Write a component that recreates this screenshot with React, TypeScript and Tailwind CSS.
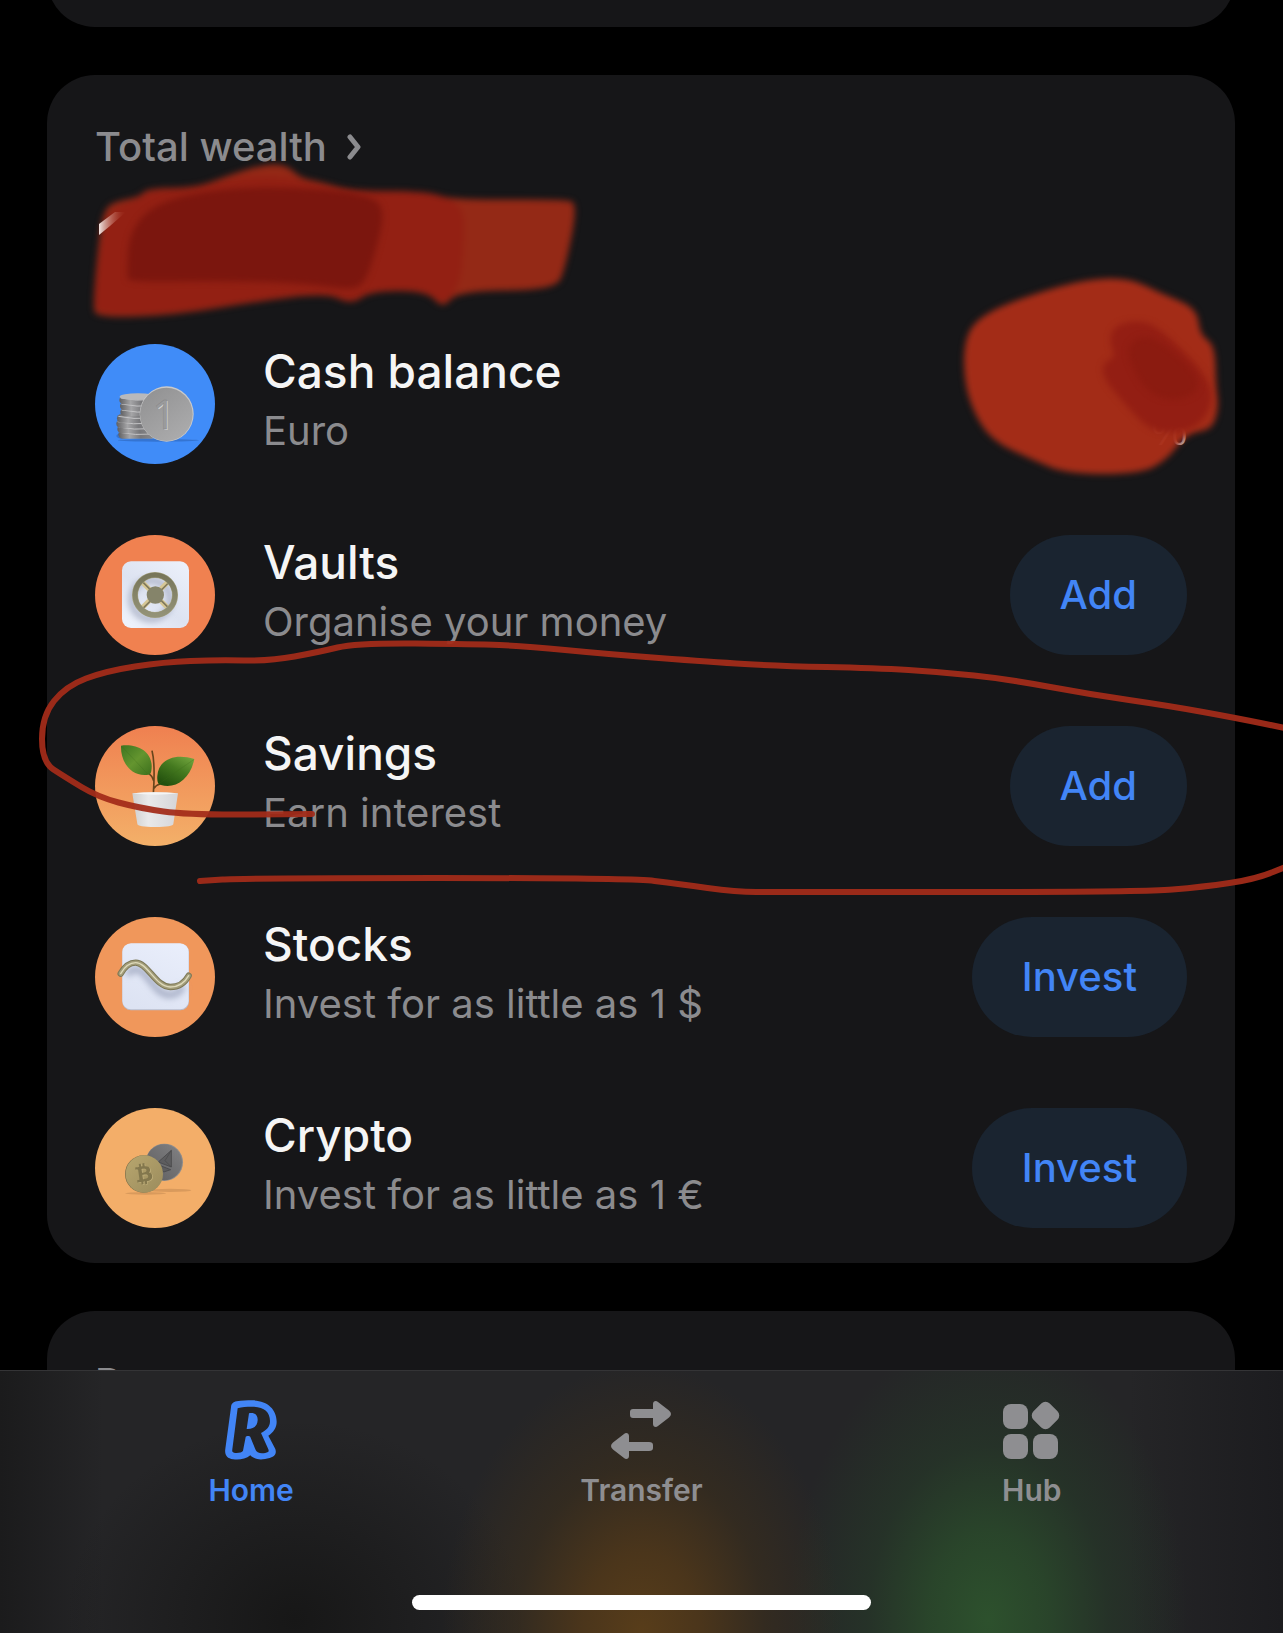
import React from "react";
import { FaBtc } from "react-icons/fa";

type Point = [number, number];

type Asset = {
	name: string;
	hint: string;
	action?: string;
	value?: string;
	icon: React.ReactNode;
};

// Curves between the midpoints, so hand drawn strokes stay smooth
function smooth(points: Point[], closed = false) {
	const mid = (a: Point, b: Point) => `${(a[0] + b[0]) / 2} ${(a[1] + b[1]) / 2}`;
	const n = points.length;
	if (closed) {
		const parts = points.map((p, i) => `Q${p[0]} ${p[1]} ${mid(p, points[(i + 1) % n])}`);
		return `M${mid(points[n - 1], points[0])}${parts.join("")}Z`;
	}
	const inner = points.slice(1, -1).map((p, i) => `Q${p[0]} ${p[1]} ${mid(p, points[i + 2])}`);
	return `M${points[0].join(" ")}L${mid(points[0], points[1])}${inner.join("")}L${points[n - 1].join(" ")}`;
}

const amountOuter: Point[] = [
	[93, 305], [98, 247], [104, 207], [122, 200], [139, 197], [148, 188], [196, 188], [229, 175],
	[261, 165], [286, 164], [300, 178], [322, 182], [351, 191], [424, 191], [453, 200], [565, 199],
	[578, 204], [565, 270], [555, 290], [457, 291], [443, 309], [427, 291], [371, 291], [351, 305],
	[327, 293], [253, 302], [176, 315], [96, 318],
];
const amountMiddle: Point[] = [
	[94, 302], [100, 247], [108, 211], [139, 199], [150, 190], [196, 189], [240, 176], [286, 176],
	[322, 186], [351, 192], [424, 191], [455, 200], [465, 216], [463, 250], [460, 285], [443, 306],
	[427, 290], [371, 290], [351, 304], [327, 292], [253, 301], [176, 313], [99, 315],
];
const amountInner: Point[] = [
	[127, 276], [129, 232], [155, 203], [220, 188], [302, 187], [372, 195], [385, 212], [376, 250],
	[365, 283], [351, 290], [302, 283], [220, 281], [129, 282],
];
const balanceOuter: Point[] = [
	[963, 370], [966, 332], [987, 312], [1033, 294], [1087, 279], [1130, 278], [1160, 293],
	[1197, 308], [1200, 335], [1215, 345], [1216, 387], [1219, 407], [1212, 430], [1187, 433],
	[1167, 460], [1140, 474], [1067, 474], [1033, 460], [990, 440], [970, 405],
];
const balanceDark: Point[] = [
	[1109, 340], [1115, 325], [1140, 320], [1160, 328], [1205, 373], [1214, 400], [1200, 425],
	[1178, 433], [1150, 431], [1123, 402], [1103, 378], [1103, 362], [1116, 358],
];
const balanceDarker: Point[] = [
	[1126, 345], [1150, 332], [1200, 375], [1196, 395], [1170, 401], [1148, 392], [1133, 370],
];
const circleTop: Point[] = [
	[312, 814], [188, 815], [139, 808], [98, 797], [65, 777], [42, 762], [42, 716], [66, 686],
	[106, 671], [164, 662], [217, 660], [270, 661], [319, 652], [356, 643], [475, 644], [524, 646],
	[606, 654], [712, 662], [777, 666], [876, 668], [941, 672], [1007, 679], [1088, 694],
	[1170, 706], [1236, 718], [1290, 729],
];
const circleBottom: Point[] = [
	[1290, 865], [1256, 879], [1203, 887], [1142, 892], [777, 892], [736, 892], [679, 884],
	[630, 878], [245, 878], [200, 881],
];

function Scribbles() {
	return (
		<svg
			viewBox="0 0 1283 1370"
			className="pointer-events-none absolute top-0 left-0 w-full"
			aria-hidden="true"
		>
			<defs>
				<filter id="brush" x="-10%" y="-10%" width="120%" height="120%" colorInterpolationFilters="sRGB">
					<feGaussianBlur stdDeviation="3" />
				</filter>
				<linearGradient id="digit" x1="0" x2="1">
					<stop offset="0" stopColor="#f3e4e1" />
					<stop offset="1" stopColor="#b0402a" stopOpacity="0" />
				</linearGradient>
			</defs>
			<g filter="url(#brush)">
				<path d={smooth(amountOuter, true)} fill="#942916" />
				<path d={smooth(amountMiddle, true)} fill="#932013" />
			</g>
			<path d={smooth(amountInner, true)} fill="#7b160e" filter="url(#brush)" />
			<path d="M99 224L115 212H126L110 226L99 235Z" fill="url(#digit)" />
			<path d={smooth(balanceOuter, true)} fill="#a82d18" fillOpacity="0.97" filter="url(#brush)" />
			<path d={smooth(balanceDark, true)} fill="#931e13" filter="url(#brush)" />
			<path d={smooth(balanceDarker, true)} fill="#8b1b10" filter="url(#brush)" />
			<g fill="none" stroke="#a32c19" strokeOpacity="0.94" strokeWidth="6" strokeLinecap="round">
				<path d={smooth(circleTop)} />
				<path d={smooth(circleBottom)} />
			</g>
		</svg>
	);
}

function CashIcon() {
	const discs: Point[] = [
		[70, 266], [67, 250], [64, 234], [66, 218], [76, 199], [75, 181], [73, 163],
	];
	return (
		<svg viewBox="0 0 360 360" className="size-[120px] shrink-0 rounded-full bg-[#408cf8]" aria-hidden="true">
			<defs>
				<linearGradient id="disc" x1="0" x2="1">
					<stop offset="0" stopColor="#5f5f61" />
					<stop offset="0.3" stopColor="#a5a5a7" />
					<stop offset="0.6" stopColor="#77777a" />
					<stop offset="1" stopColor="#8d8d8f" />
				</linearGradient>
				<linearGradient id="coin" x1="0" y1="0" x2="0.7" y2="1">
					<stop offset="0" stopColor="#8f8f90" />
					<stop offset="1" stopColor="#ababac" />
				</linearGradient>
			</defs>
			<ellipse cx="190" cy="289" rx="122" ry="4" fill="#3474d2" />
			<ellipse cx="84" cy="276" rx="20" ry="8" fill="#3474d2" />
			{discs.map(([x, y]) => (
				<g key={y}>
					<rect x={x} y={y - 8} width="112" height="26" rx="13" fill="url(#disc)" />
					<path d={`M${x + 4} ${y - 1}Q${x + 50} ${y + 9} ${x + 100} ${y + 4}`} stroke="#c3c3c5" strokeWidth="3" fill="none" />
				</g>
			))}
			<ellipse cx="129" cy="158" rx="55" ry="10" fill="#b9b9bb" />
			<ellipse cx="215" cy="210" rx="81" ry="83" fill="#cacaca" />
			<ellipse cx="214" cy="211" rx="79" ry="80" fill="url(#coin)" />
			<g fontFamily="Open Sans, sans-serif" fontSize="120" textAnchor="middle">
				<text x="210" y="257" fill="#d2d2d2">1</text>
				<text x="207" y="255" fill="#9b9b9c" stroke="#838384" strokeWidth="1">1</text>
			</g>
		</svg>
	);
}

function VaultIcon() {
	return (
		<svg viewBox="0 0 360 360" className="size-[120px] shrink-0 rounded-full bg-[#f08150]" aria-hidden="true">
			<defs>
				<linearGradient id="safe" x1="1" y1="0" x2="0.2" y2="1">
					<stop offset="0" stopColor="#edf1fb" />
					<stop offset="0.6" stopColor="#dde3f1" />
					<stop offset="1" stopColor="#edf1fb" />
				</linearGradient>
				<linearGradient id="rim" x1="0" y1="0" x2="0" y2="1">
					<stop offset="0" stopColor="#77765a" />
					<stop offset="1" stopColor="#939277" />
				</linearGradient>
				<filter id="soft" x="-30%" y="-30%" width="160%" height="160%">
					<feGaussianBlur stdDeviation="9" />
				</filter>
			</defs>
			<rect x="81" y="79" width="201" height="200" rx="27" fill="url(#safe)" />
			<circle cx="168" cy="194" r="58" fill="none" stroke="#adb4c8" strokeWidth="18" filter="url(#soft)" />
			<path d="M142 142L218 218M218 142L142 218" stroke="#d6c795" strokeWidth="15" />
			<path d="M142 140L220 218M220 144L144 220" stroke="#80795c" strokeWidth="5" />
			<circle cx="180" cy="180" r="60" fill="none" stroke="#a9a685" strokeWidth="18" />
			<circle cx="180" cy="180" r="60" fill="none" stroke="url(#rim)" strokeWidth="15" />
			<circle cx="181" cy="180" r="26" fill="#85846a" />
		</svg>
	);
}

function SavingsIcon() {
	return (
		<svg viewBox="0 0 360 360" className="size-[120px] shrink-0 rounded-full bg-linear-to-b from-[#ef8050] to-[#f3b069]" aria-hidden="true">
			<defs>
				<linearGradient id="pot" x1="0" x2="1">
					<stop offset="0" stopColor="#cfcfcf" />
					<stop offset="0.35" stopColor="#e9e9ea" />
					<stop offset="1" stopColor="#d5d5d8" />
				</linearGradient>
				<linearGradient id="leafLeft" x1="0" y1="0" x2="1" y2="1">
					<stop offset="0" stopColor="#3c7420" />
					<stop offset="0.5" stopColor="#64952f" />
					<stop offset="1" stopColor="#3c701d" />
				</linearGradient>
				<linearGradient id="leafRight" x1="1" y1="0" x2="0.3" y2="1">
					<stop offset="0" stopColor="#78ab42" />
					<stop offset="0.5" stopColor="#44791f" />
					<stop offset="1" stopColor="#23510e" />
				</linearGradient>
			</defs>
			<path d="M175 204C178 160 180 110 171 74M176 164Q172 150 162 143M177 187Q182 178 195 174" fill="none" stroke="#67451b" strokeWidth="5" />
			<path d="M78 59C130 52 178 80 169 134Q168 144 160 146C112 154 76 112 78 59Z" fill="url(#leafLeft)" />
			<path d="M298 99C240 80 190 100 187 150Q185 176 198 177C240 190 286 160 298 99Z" fill="url(#leafRight)" />
			<path d="M80 61L160 146M296 101L192 173" stroke="#3b6b1b" strokeOpacity="0.4" strokeWidth="2" />
			<path d="M112 202Q180 196 249 202L235 294Q234 303 180 303Q128 303 127 294Z" fill="url(#pot)" />
			<path d="M112 202Q180 196 249 202Q180 210 112 202Z" fill="#f5f5f5" />
		</svg>
	);
}

function StocksIcon() {
	const wave = "M77 170C90 147 104 137 122 137C158 137 182 210 226 210C250 210 268 200 281 176";
	return (
		<svg viewBox="0 0 360 360" className="size-[120px] shrink-0 rounded-full bg-[#f0975b]" aria-hidden="true">
			<defs>
				<linearGradient id="tile" x1="0.8" y1="0" x2="0.3" y2="1">
					<stop offset="0" stopColor="#e9eefb" />
					<stop offset="1" stopColor="#dde3f3" />
				</linearGradient>
				<filter id="shade" x="-20%" y="-40%" width="140%" height="200%">
					<feGaussianBlur stdDeviation="9" />
				</filter>
			</defs>
			<rect x="82" y="80" width="200" height="200" rx="26" fill="#b9bdcd" />
			<rect x="82" y="79" width="199" height="198" rx="26" fill="url(#tile)" />
			<path d="M98 174C108 156 118 156 128 158C160 164 180 236 226 234C246 232 256 224 264 206" fill="none" stroke="#98a1ba" strokeOpacity="0.8" strokeWidth="20" filter="url(#shade)" />
			<path d={wave} fill="none" stroke="#7c7856" strokeWidth="19" strokeLinecap="round" />
			<path d={wave} fill="none" stroke="#a39d7a" strokeWidth="13" strokeLinecap="round" />
			<path d={wave} fill="none" stroke="#dedabb" strokeWidth="4" strokeLinecap="round" />
		</svg>
	);
}

function CryptoIcon() {
	return (
		<svg viewBox="0 0 360 360" className="size-[120px] shrink-0 rounded-full bg-[#f3ae69]" aria-hidden="true">
			<defs>
				<linearGradient id="eth" x1="0" y1="1" x2="1" y2="0">
					<stop offset="0" stopColor="#5c5c5e" />
					<stop offset="1" stopColor="#828284" />
				</linearGradient>
				<linearGradient id="btc" x1="0" y1="0" x2="1" y2="1">
					<stop offset="0" stopColor="#b8a66e" />
					<stop offset="1" stopColor="#9b8c5d" />
				</linearGradient>
			</defs>
			<ellipse cx="225" cy="247" rx="64" ry="5" fill="#d99a5c" />
			<ellipse cx="152" cy="256" rx="62" ry="4" fill="#d99a5c" />
			<circle cx="208" cy="163" r="56" fill="#8c8c8d" />
			<circle cx="207" cy="163" r="54" fill="url(#eth)" />
			<path d="M229 127L190 162L229 177ZM188 170L227 185L206 192Z" fill="#5d5d5f" stroke="#4d4d4f" strokeWidth="3" />
			<path d="M229 127L210 158L229 177" fill="none" stroke="#48484a" strokeWidth="2" />
			<circle cx="146" cy="198" r="56" fill="#7a6e49" />
			<circle cx="148" cy="198" r="56" fill="url(#btc)" />
			<g transform="rotate(-8 148 198)">
				<FaBtc x="117" y="167" size="64" color="#c1b17d" />
				<FaBtc x="115" y="165" size="64" color="#83774d" />
			</g>
		</svg>
	);
}

function HomeIcon() {
	return (
		<svg viewBox="136 120 156 180" className="h-[60px] w-[52px]" fill="currentColor" aria-hidden="true">
			<path
				fillRule="evenodd"
				d="M154 142C155 131 160 126 171 124C186 121 202 121 217 121C262 121 291 147 291 185C291 203 281 217 266 227L287 267C292 283 283 290 270 294C246 301 225 300 212 286C198 299 176 300 160 298C142 296 134 285 137 266ZM174 145L158 268C157 274 158 277 163 278C173 280 187 278 190 272L198 231C200 227 210 227 212 231L227 268C229 276 238 280 247 280C254 280 260 278 265 276C268 274 267 271 266 268L244 219C260 210 271 202 271 183C271 155 252 140 217 140C200 140 187 141 174 145ZM208 160C224 157 235 164 234 181C233 198 222 208 201 207Z"
			/>
		</svg>
	);
}

function TransferIcon() {
	return (
		<svg viewBox="0 0 60 60" className="size-[60px]" fill="currentColor" aria-hidden="true">
			<path d="M22 9H42V4C42 1 45 0 47 2L58 10.500Q62 14 58 17.500L47 26C45 28 42 27 42 24V18H22Q19 18 19 15V12Q19 9 22 9Z" />
			<path d="M38 51H18V56C18 59 15 60 13 58L2 49.500Q-2 46 2 42.500L13 34C15 32 18 33 18 36V42H38Q42 42 42 45V48Q42 51 38 51Z" />
		</svg>
	);
}

function HubIcon() {
	return (
		<svg viewBox="0 0 60 60" className="size-[60px]" fill="currentColor" aria-hidden="true">
			<rect x="1" y="4" width="25" height="25" rx="8" />
			<rect x="1" y="34" width="25" height="25" rx="8" />
			<rect x="31" y="34" width="25" height="25" rx="8" />
			<rect x="32" y="4" width="23" height="23" rx="6" transform="rotate(45 43.500 15.500)" />
		</svg>
	);
}

const assets: Asset[] = [
	{ name: "Cash balance", hint: "Euro", value: "%", icon: <CashIcon /> },
	{ name: "Vaults", hint: "Organise your money", action: "Add", icon: <VaultIcon /> },
	{ name: "Savings", hint: "Earn interest", action: "Add", icon: <SavingsIcon /> },
	{ name: "Stocks", hint: "Invest for as little as 1 $", action: "Invest", icon: <StocksIcon /> },
	{ name: "Crypto", hint: "Invest for as little as 1 €", action: "Invest", icon: <CryptoIcon /> },
];

function AssetRow({ asset }: { asset: Asset }) {
	return (
		<li className="flex items-center">
			{asset.icon}
			<div className="ml-12 flex-1">
				<h3 className="text-[46px] leading-[54px] font-medium text-[#f5f5f5]">{asset.name}</h3>
				<p className="text-[40px] leading-[66px] text-[#8b8b8e]">{asset.hint}</p>
			</div>
			{asset.value && (
				<span className="self-end font-['Liberation_Sans',sans-serif] text-[40px] leading-[66px] text-[#b4b4b8]">
					{asset.value}
				</span>
			)}
			{asset.action && (
				<button
					type="button"
					aria-label={`${asset.action} ${asset.name}`}
					className="h-[120px] rounded-full bg-[#1a2430] px-[50px] text-[40px] font-medium text-[#4285f6]"
				>
					{asset.action}
				</button>
			)}
		</li>
	);
}

function TabBar() {
	return (
		<nav className="shrink-0 border-t border-[#343436] bg-[#252527] bg-[radial-gradient(ellipse_200px_270px_at_50%_100%,#583d1a,#513819d9_30%,#4231197a_62%,transparent),radial-gradient(ellipse_200px_290px_at_77%_95%,#2d512d,#2a4a2bd9_30%,#2640297a_60%,transparent),radial-gradient(ellipse_230px_200px_at_23%_95%,#171717,transparent),linear-gradient(to_right,#1b1b1c,transparent_8%,transparent_88%,#1c1c1f)] pt-[29px]">
			<div className="grid grid-cols-3 px-14 text-[30px] leading-9 font-semibold text-[#8e8e91]">
				<a href="#home" aria-current="page" className="flex flex-col items-center gap-3 text-[#4285f6]">
					<HomeIcon />
					Home
				</a>
				<a href="#transfer" className="flex flex-col items-center gap-3">
					<TransferIcon />
					Transfer
				</a>
				<a href="#hub" className="flex flex-col items-center gap-3">
					<HubIcon />
					Hub
				</a>
			</div>
			<div className="mx-auto mt-[87px] mb-[23px] h-[15px] w-[459px] rounded-full bg-white" />
		</nav>
	);
}

function App() {
	return (
		<div className="flex h-screen flex-col bg-black font-['Inter',sans-serif]">
			<main className="relative min-h-0 flex-1 overflow-hidden pr-12 pl-[47px]">
				<div className="-mt-[69px] h-24 rounded-[48px] bg-[#161618]" />

				<section className="mt-12 rounded-[48px] bg-[#161618] px-12 pt-12 pb-[35px]">
					<a href="#wealth" className="flex items-center gap-5 text-[40px] leading-[48px] font-medium text-[#8b8b8e]">
						Total wealth
						<svg viewBox="0 0 14 26" className="h-[26px] w-[14px]" fill="none" stroke="currentColor" strokeWidth="5" strokeLinecap="round" strokeLinejoin="round" aria-hidden="true">
							<path d="M3 3L11 13L3 23" />
						</svg>
					</a>
					<ul className="mt-[173px] flex flex-col gap-[71px]">
						{assets.map((asset) => (
							<AssetRow key={asset.name} asset={asset} />
						))}
					</ul>
				</section>

				<section className="mt-12 rounded-t-[48px] bg-[#161618] px-12 pt-12">
					<h2 className="text-[40px] leading-[48px] font-medium text-[#8b8b8e]">P</h2>
				</section>

				<Scribbles />
			</main>
			<TabBar />
		</div>
	);
}

export default App;
